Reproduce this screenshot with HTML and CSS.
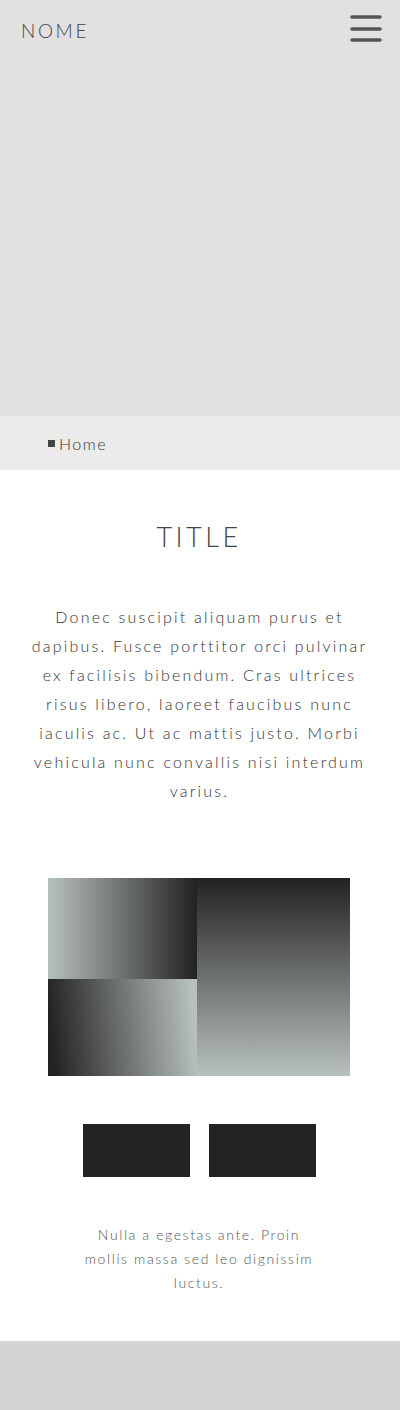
FILE: index.html
```html
<!DOCTYPE html>
<html lang="en">

<head>
    <meta charset="UTF-8">
    <meta name="viewport" content="width=device-width, initial-scale=1.0">
    <title>Nome</title>
    <link rel="stylesheet" href="styles.css">
</head>

<body>

    <header class="hero">
        <div class="topbar">
            <span class="brand">NOME</span>
            <button type="button" class="menu" aria-label="menu">
                <svg width="32" height="30" viewBox="0 0 32 30">
                    <path d="M2 3H30M2 15H30M2 26H30" stroke="#555" stroke-width="3.5" stroke-linecap="round" fill="none" />
                </svg>
            </button>
        </div>
    </header>

    <nav class="crumbs">
        <span class="crumb-mark"></span>Home
    </nav>

    <main class="content">
        <h1 class="title">TITLE</h1>

        <p class="lead">Donec suscipit aliquam purus et dapibus. Fusce porttitor orci pulvinar ex facilisis bibendum. Cras ultrices risus libero, laoreet faucibus nunc iaculis ac. Ut ac mattis justo. Morbi vehicula nunc convallis nisi interdum varius.</p>

        <div class="mosaic">
            <div class="tile tile-a"></div>
            <div class="tile tile-b"></div>
            <div class="tile tile-c"></div>
        </div>

        <div class="actions">
            <button type="button" class="block-btn"></button>
            <button type="button" class="block-btn"></button>
        </div>

        <p class="note">Nulla a egestas ante. Proin mollis massa sed leo dignissim luctus.</p>
    </main>

    <footer class="footer"></footer>

</body>

</html>
```

FILE: styles.css
```css
body {
    margin: 0;
    font-family: 'Lato', 'DejaVu Sans', sans-serif;
    font-weight: 300;
    color: #333;
    background: #fff;
}

.hero {
    height: 416px;
    background: #e1e1e1;
}

.topbar {
    display: flex;
    justify-content: space-between;
    align-items: center;
    padding: 14px 18px 0 21px;
}

.brand {
    font-size: 19px;
    letter-spacing: 2.6px;
    color: #444;
    padding-top: 2px;
}

.menu {
    border: none;
    background: none;
    padding: 0;
    width: 32px;
    height: 30px;
    cursor: pointer;
}

.menu svg {
    display: block;
}

.crumbs {
    height: 54px;
    display: flex;
    align-items: center;
    padding-left: 48px;
    background: #ebebeb;
    font-size: 16px;
    letter-spacing: 1.5px;
    color: #333;
}

.crumb-mark {
    width: 7px;
    height: 7px;
    background: #444;
    margin-right: 4px;
}

.content {
    display: flex;
    flex-direction: column;
    align-items: center;
    padding: 50px 2px 46px 0;
}

.title {
    margin: 0;
    font-size: 27px;
    font-weight: 300;
    letter-spacing: 3.5px;
    line-height: 34px;
    color: #444;
}

.lead {
    margin: 48px 0 0;
    padding: 0 29px 0 30px;
    text-align: center;
    font-size: 16px;
    line-height: 29px;
    letter-spacing: 2.2px;
}

.mosaic {
    margin-top: 73px;
    width: 302px;
    height: 198px;
    display: grid;
    grid-template-columns: 149px 153px;
    grid-template-rows: 101px 97px;
}

.tile-a {
    background: linear-gradient(90deg, #b8c1be, #222);
}

.tile-b {
    grid-row: 1 / 3;
    grid-column: 2;
    background: linear-gradient(180deg, #222, #b8c1be);
}

.tile-c {
    background: linear-gradient(84deg, #222 4%, #b8c1be 96%);
}

.actions {
    display: flex;
    gap: 19px;
    margin-top: 48px;
}

.block-btn {
    width: 107px;
    height: 53px;
    border: none;
    background: #232323;
}

.note {
    margin: 46px 0 0;
    width: 240px;
    text-align: center;
    font-size: 14px;
    line-height: 24px;
    letter-spacing: 1.6px;
    color: #555;
}

.footer {
    height: 70px;
    background: #d4d4d4;
}
```
